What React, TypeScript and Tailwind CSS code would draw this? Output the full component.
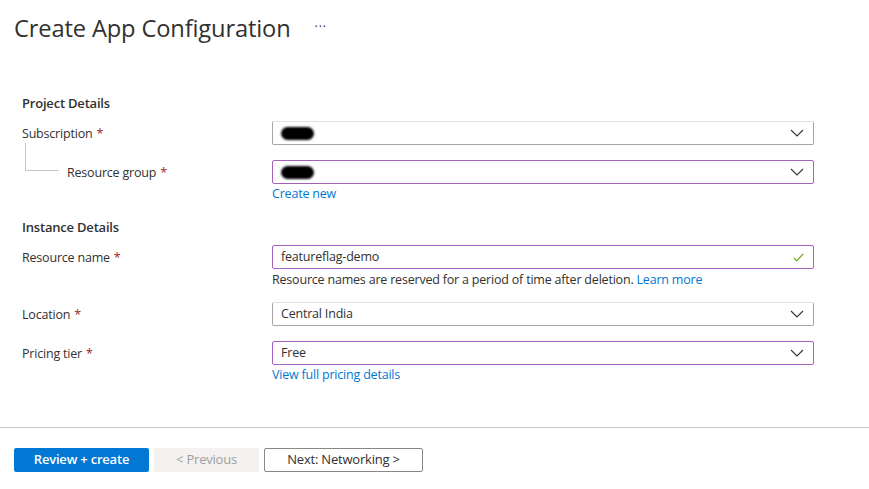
import React from 'react';

const font = { fontFamily: '"Open Sans", "Noto Sans", sans-serif' };

const Chevron = () => (
  <svg width="14" height="8" viewBox="0 0 14 8" className="shrink-0">
    <path d="M1 1l6 6 6-6" fill="none" stroke="#323130" strokeWidth="1.1" />
  </svg>
);

const Check = () => (
  <svg width="11" height="9" viewBox="0 0 11 9" className="shrink-0">
    <path d="M0.8 4.8l3 3 6.4-7" fill="none" stroke="#57a300" strokeWidth="1.1" />
  </svg>
);

const Blob = () => <div className="w-[33px] h-[13px] rounded-full bg-black blur-[1px]" />;

const Req = () => <span className="text-[#a4262c] ml-[4px]">*</span>;

const Field: React.FC<{ purple?: boolean; children?: React.ReactNode; icon?: React.ReactNode }> = ({ purple, children, icon }) => (
  <div
    className={`w-[542px] h-[24px] flex items-center pl-[8px] pr-[9px] rounded-[2px] border text-[12.5px] tracking-[-0.2px] text-[#323130] ${
      purple ? 'border-[#a562c0]' : 'border-[#a6a6a6] border-t-[#e1e1e1]'
    }`}
  >
    <div className="flex-1 flex items-center">{children}</div>
    {icon}
  </div>
);

// label column is 250px wide, fields start at x=272
const label = 'w-[250px] text-[12.5px] tracking-[-0.2px] pt-[2px]';

export default function App() {
  return (
    <div className="w-[869px] h-[489px] bg-white text-[#323130] overflow-hidden" style={font}>
      <div className="h-[56px] flex items-center pl-[14px]">
        <h1 className="text-[23.7px] leading-none tracking-[-0.15px] text-[#323130] mt-[1px]">Create App Configuration</h1>
        <span className="ml-[24px] text-[12px] text-[#323130] -mt-[3px] tracking-[1px]">···</span>
      </div>

      <div className="pl-[22px] mt-[37px]">
        <div className="h-[20px] leading-[20px] text-[13px] font-semibold tracking-[-0.2px]">Project Details</div>

        <div className="flex items-center mt-[8px]">
          <div className={label}>Subscription<Req /></div>
          <Field icon={<Chevron />}><Blob /></Field>
        </div>

        <div className="flex items-center mt-[15px]">
          <div className={`${label} relative pl-[45px]`}>
            <div className="absolute left-[3px] -top-[19px] w-[34px] h-[28px] border-l border-b border-[#c8c6c4]" />
            Resource group<Req />
          </div>
          <Field purple icon={<Chevron />}><Blob /></Field>
        </div>
        <div className="ml-[250px] h-[18px] leading-[18px] text-[12.5px] tracking-[-0.2px] text-[#0078d4] pt-[1px]">Create new</div>

        <div className="h-[20px] leading-[20px] text-[13px] font-semibold tracking-[-0.2px] mt-[15px]">Instance Details</div>

        <div className="flex items-center mt-[8px]">
          <div className={label}>Resource name<Req /></div>
          <Field purple icon={<Check />}>featureflag-demo</Field>
        </div>
        <div className="ml-[250px] h-[18px] leading-[18px] text-[12.5px] tracking-[-0.2px] mt-[1px] pt-[1px]">
          Resource names are reserved for a period of time after deletion. <span className="text-[#0078d4]">Learn more</span>
        </div>

        <div className="flex items-center mt-[14px]">
          <div className={label}>Location<Req /></div>
          <Field icon={<Chevron />}>Central India</Field>
        </div>

        <div className="flex items-center mt-[15px]">
          <div className={label}>Pricing tier<Req /></div>
          <Field purple icon={<Chevron />}>Free</Field>
        </div>
        <div className="ml-[250px] h-[18px] leading-[18px] text-[12.5px] tracking-[-0.2px] text-[#0078d4] pt-[1px]">View full pricing details</div>
      </div>

      <div className="mt-[44px] h-px bg-[#c8c6c4]" />

      <div className="flex gap-[5px] pl-[14px] mt-[20px]">
        <button className="w-[135px] h-[24px] rounded-[2px] bg-[#0078d4] text-white text-[13px] font-semibold tracking-[-0.2px]">Review + create</button>
        <button className="w-[105px] h-[24px] rounded-[2px] bg-[#f3f2f1] text-[#a19f9d] text-[13px] tracking-[-0.2px]">&lt; Previous</button>
        <button className="w-[159px] h-[24px] rounded-[2px] bg-white border border-[#8a8886] text-[#323130] text-[13px] tracking-[-0.2px]">Next: Networking &gt;</button>
      </div>
    </div>
  );
}
